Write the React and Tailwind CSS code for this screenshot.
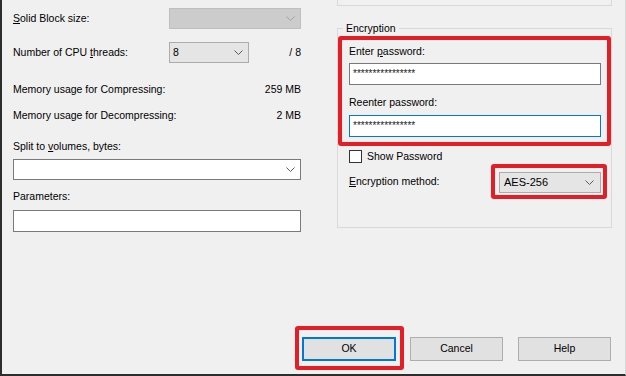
const Chevron = ({ color = '#5a5a5a' }) => (
  <svg width="9" height="5" viewBox="0 0 9 5" className="shrink-0">
    <path d="M0.5 0.5L4.5 4.5L8.5 0.5" fill="none" stroke={color} strokeWidth="1" />
  </svg>
);

const Stars = () => <span className="text-[10px] leading-none text-[#222]">****************</span>;

export default function App() {
  return (
    <div className="w-[626px] h-[376px] bg-[#f0f0f0] border-l-2 border-b-2 border-r border-l-[#2d2d2d] border-b-[#2d2d2d] border-r-[#d8d8d8] flex flex-col overflow-hidden font-['Liberation_Sans',Arial,sans-serif] text-[10.5px] text-black">
      <div className="h-[326px] flex">
        {/* left column */}
        <div className="w-[288px] ml-[11px] pt-[8px] flex flex-col">
          <div className="h-[21px] flex items-center">
            <span className="w-[156px]"><span className="underline">S</span>olid Block size:</span>
            <div className="w-[132px] h-[21px] bg-[#cccccc] border border-[#bfbfbf] flex items-center justify-end pr-[5px]">
              <Chevron color="#a3a3a3" />
            </div>
          </div>
          <div className="h-[21px] mt-[13px] flex items-center">
            <span className="w-[156px]">Number of CPU <span className="underline">t</span>hreads:</span>
            <div className="w-[80px] h-[21px] bg-[#e5e5e5] border border-[#acacac] flex items-center justify-between pl-[3px] pr-[5px]">
              <span>8</span>
              <Chevron />
            </div>
            <span className="ml-auto">/ 8</span>
          </div>
          <div className="h-[20px] mt-[17px] flex items-center justify-between">
            <span>Memory usage for Compressing:</span>
            <span>259 MB</span>
          </div>
          <div className="h-[20px] mt-[6px] flex items-center justify-between">
            <span>Memory usage for Decompressing:</span>
            <span>2 MB</span>
          </div>
          <div className="h-[16px] mt-[13px] flex items-center">
            <span>Split to <span className="underline">v</span>olumes, bytes:</span>
          </div>
          <div className="h-[21px] mt-[4px] bg-white border border-[#7a7a7a] flex items-center justify-end pr-[5px]">
            <Chevron />
          </div>
          <div className="h-[16px] mt-[9px] flex items-center">
            <span>Parameters:</span>
          </div>
          <div className="h-[22px] mt-[5px] bg-white border border-[#7a7a7a]" />
        </div>

        {/* right column */}
        <div className="w-[275px] ml-[36px] flex flex-col">
          <div className="h-[6px] border-x border-b border-[#d9d9d9]" />
          <fieldset className="mt-[14px] border border-[#d9d9d9] pb-[28px]">
            <legend className="ml-[5px] px-[3px] leading-[16px]">Encryption</legend>
            <div className="border-4 border-[#e31e26] rounded-[3px] pl-[7px] pt-[4px] pb-[5px]">
              <div className="h-[16px] flex items-center">
                <span>Enter <span className="underline">p</span>assword:</span>
              </div>
              <div className="w-[252px] h-[22px] mt-[3px] bg-white border border-[#7a7a7a] flex items-center pl-[3px]">
                <Stars />
              </div>
              <div className="h-[16px] mt-[10px] flex items-center">
                <span>Reenter password:</span>
              </div>
              <div className="w-[252px] h-[22px] mt-[4px] bg-white border border-[#0078d7] flex items-center pl-[3px]">
                <Stars />
              </div>
            </div>
            <div className="h-[13px] mt-[4px] ml-[11px] flex items-center gap-[5px]">
              <div className="w-[13px] h-[13px] bg-white border border-[#333333]" />
              <span>Show Password</span>
            </div>
            <div className="mt-[1px] flex items-center">
              <span className="ml-[11px]"><span className="underline">E</span>ncryption method:</span>
              <div className="ml-auto mr-[4px] w-[116px] border-4 border-[#e31e26] rounded-[3px] pt-[4px] pb-[2px] pl-[4px] pr-[2px]">
                <div className="h-[21px] bg-[#e5e5e5] border border-[#acacac] flex items-center justify-between pl-[4px] pr-[6px]">
                  <span className="text-[11px]">AES-256</span>
                  <Chevron />
                </div>
              </div>
            </div>
          </fieldset>
        </div>
      </div>

      {/* buttons */}
      <div className="flex items-start pl-[293px]">
        <div className="w-[109px] h-[44px] border-4 border-[#e31e26] rounded-[3px] pt-[7px] pl-[3px]">
          <button className="w-[94px] h-[24px] bg-[#e1e1e1] border-2 border-[#0078d7] flex items-center justify-center">OK</button>
        </div>
        <button className="ml-[6px] mt-[11px] w-[93px] h-[24px] bg-[#e1e1e1] border border-[#adadad] flex items-center justify-center">Cancel</button>
        <button className="ml-[15px] mt-[11px] w-[93px] h-[24px] bg-[#e1e1e1] border border-[#adadad] flex items-center justify-center">Help</button>
      </div>
    </div>
  );
}
